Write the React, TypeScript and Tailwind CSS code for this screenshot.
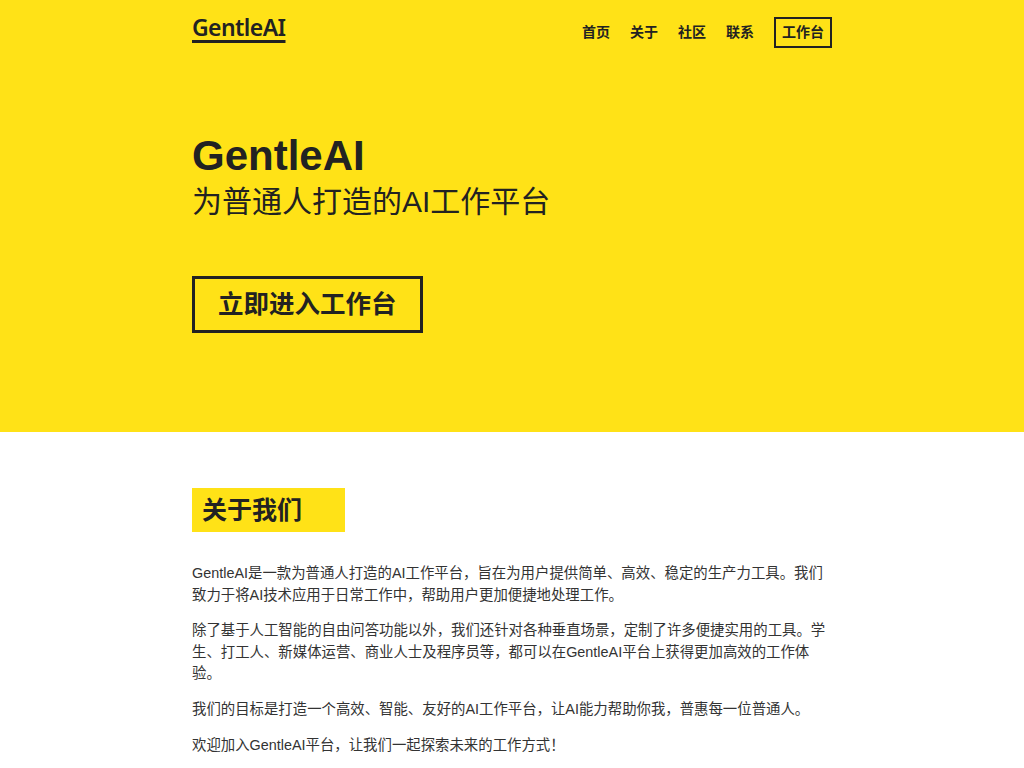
export default function App() {
  const nav = ["首页", "关于", "社区", "联系"];
  const paras = [
    "GentleAI是一款为普通人打造的AI工作平台，旨在为用户提供简单、高效、稳定的生产力工具。我们致力于将AI技术应用于日常工作中，帮助用户更加便捷地处理工作。",
    "除了基于人工智能的自由问答功能以外，我们还针对各种垂直场景，定制了许多便捷实用的工具。学生、打工人、新媒体运营、商业人士及程序员等，都可以在GentleAI平台上获得更加高效的工作体验。",
    "我们的目标是打造一个高效、智能、友好的AI工作平台，让AI能力帮助你我，普惠每一位普通人。",
    "欢迎加入GentleAI平台，让我们一起探索未来的工作方式！",
  ];

  return (
    <div className="min-h-screen w-full bg-white text-[#222] font-['Liberation_Sans','Noto_Sans_CJK_SC',sans-serif]">
      {/* ── Hero ── */}
      <div className="bg-[#ffe217] h-[432px]">
        <div className="max-w-[640px] mx-auto">
          <header className="h-[64px] flex items-center justify-between">
            <span className="font-['Noto_Sans',sans-serif] font-semibold text-[23px] leading-none tracking-tight underline decoration-[3px] underline-offset-[4px] -mt-[10px]">
              GentleAI
            </span>
            <nav className="flex items-center gap-5 text-[14px] font-bold">
              {nav.map((n) => (
                <a key={n} className="leading-none">
                  {n}
                </a>
              ))}
              <a className="border-2 border-[#222] px-[6px] h-[31px] flex items-center leading-none">
                工作台
              </a>
            </nav>
          </header>

          <h1 className="mt-[67px] text-[42px] font-bold leading-[1.2]">GentleAI</h1>
          <p className="text-[30px] leading-[1.3] mt-[1px]">为普通人打造的AI工作平台</p>

          <button className="mt-[55px] border-[3px] border-[#222] h-[57px] px-[23px] text-[25.5px] font-bold leading-none flex items-center">
            立即进入工作台
          </button>
        </div>
      </div>

      {/* ── About ── */}
      <div className="max-w-[640px] mx-auto pt-[56px] pb-10">
        <h2 className="bg-[#ffe217] w-[153px] h-[44px] pl-[10px] flex items-center text-[25px] font-bold leading-none">
          关于我们
        </h2>
        <div className="mt-[31px] text-[14.4px] leading-[1.5] text-[#333]">
          {paras.map((p, i) => (
            <p key={i} className="mb-[14px]">
              {p}
            </p>
          ))}
        </div>
      </div>
    </div>
  );
}
